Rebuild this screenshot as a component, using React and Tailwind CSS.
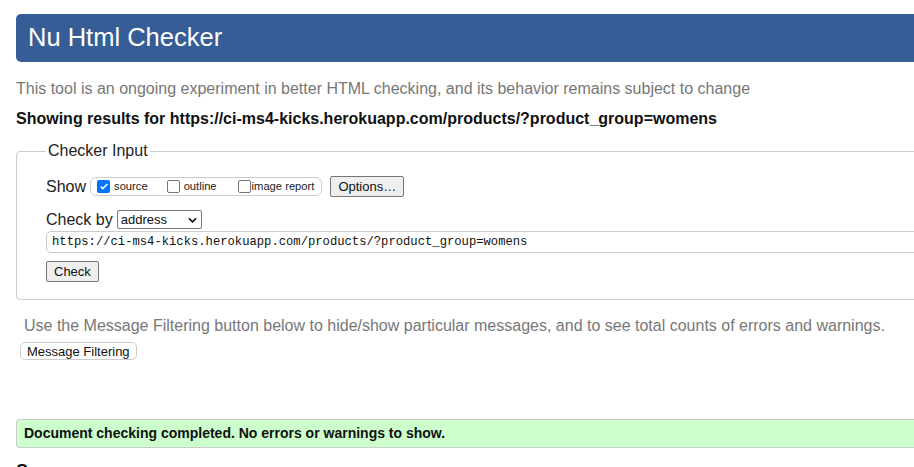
export default function App() {
  return (
    <div className="h-[467px] w-[914px] overflow-hidden bg-white font-['Liberation_Sans',Arial,sans-serif]">
      <div className="w-[960px] pl-[16px] pt-[14px]">
        {/* Header */}
        <header className="flex h-[48px] items-center rounded-[5px] bg-[#365d95] pl-[12px]">
          <h1 className="text-[25.5px] leading-none text-white">Nu Html Checker</h1>
        </header>

        <p className="mt-[18px] text-[16px] leading-[18px] text-[#777]">
          This tool is an ongoing experiment in better HTML checking, and its behavior remains subject to change
        </p>
        <p className="mt-[12px] text-[16px] font-bold leading-[18px] text-[#111]">
          Showing results for https://ci-ms4-kicks.herokuapp.com/products/?product_group=womens
        </p>

        {/* Checker input */}
        <fieldset className="mt-[14px] h-[158px] rounded-[4px] border border-[#ccc] pl-[29px] pr-3">
          <legend className="px-[2px] text-[16px] leading-[18px] text-[#222]">Checker Input</legend>

          <div className="mt-[16px] flex h-[21px] items-center">
            <span className="text-[16px] leading-none text-[#222]">Show</span>
            <div className="ml-[4px] flex h-[19px] items-center rounded-[6px] border border-[#ccc] pl-[6px] pr-[7px] text-[11.2px] text-[#222]">
              <label className="flex items-center">
                <span className="mr-[4px] flex h-[13px] w-[13px] items-center justify-center rounded-[2px] bg-[#0075ff]">
                  <svg viewBox="0 0 12 12" className="h-[10px] w-[10px]">
                    <path d="M2 6.5l2.6 2.6L10 3.5" fill="none" stroke="white" strokeWidth="1.8" />
                  </svg>
                </span>
                source
              </label>
              <label className="ml-[19px] flex items-center">
                <span className="mr-[4px] h-[13px] w-[13px] rounded-[2px] border border-[#767676] bg-white" />
                outline
              </label>
              <label className="ml-[21px] flex items-center">
                <span className="mr-[1px] h-[13px] w-[13px] rounded-[2px] border border-[#767676] bg-white" />
                image report
              </label>
            </div>
            <button className="ml-[8px] h-[21px] rounded-[2px] border border-[#767676] bg-[#efefef] px-[7px] text-[13px] leading-none text-[#111]">
              Options…
            </button>
          </div>

          <div className="mt-[13px] flex h-[19px] items-center">
            <span className="text-[16px] leading-none text-[#222]">Check by</span>
            <div className="ml-[4px] flex h-[19px] w-[85px] items-center justify-between rounded-[2px] border border-[#767676] pl-[3px] pr-[4px] text-[13px] text-[#111]">
              address
              <svg viewBox="0 0 10 6" className="h-[6px] w-[9px]">
                <path d="M1 1l4 4 4-4" fill="none" stroke="#111" strokeWidth="1.8" />
              </svg>
            </div>
          </div>

          <div className="mt-[2px] flex h-[22px] items-center rounded-l-[5px] border border-[#ccc] pl-[5px] font-['Liberation_Mono',monospace] text-[12.2px] text-[#111]">
            https://ci-ms4-kicks.herokuapp.com/products/?product_group=womens
          </div>

          <button className="mt-[8px] h-[21px] rounded-[2px] border border-[#767676] bg-[#efefef] px-[7px] text-[13px] leading-none text-[#111]">
            Check
          </button>
        </fieldset>

        <p className="mt-[17px] pl-[8px] text-[16px] leading-[18px] text-[#777]">
          Use the Message Filtering button below to hide/show particular messages, and to see total counts of errors and warnings.
        </p>
        <button className="ml-[4px] mt-[7px] h-[18px] rounded-[5px] border border-[#ccc] bg-white px-[6px] text-[13px] leading-none text-[#111]">
          Message Filtering
        </button>

        <div className="mt-[56px] flex h-[29px] items-center rounded-l-[3px] border border-[#ccc] bg-[#ccffcc] pl-[7px] text-[14px] font-bold text-[#111]">
          Document checking completed. No errors or warnings to show.
        </div>

        <h2 className="mt-[12px] text-[18px] font-bold leading-[22px] text-[#111]">Source</h2>
      </div>
    </div>
  );
}
